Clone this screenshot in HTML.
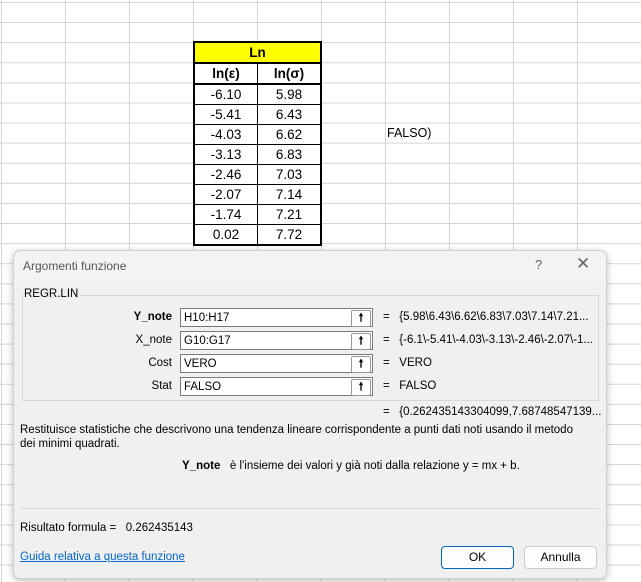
<!DOCTYPE html>
<html><head><style>
body{margin:0;width:641px;height:582px;overflow:hidden;position:relative;background:#fff;font-family:"Liberation Sans",sans-serif;}
.grid{position:absolute;left:0;top:0;width:641px;height:582px;
background-image:linear-gradient(to right,#d4d4d4 1px,transparent 1px),linear-gradient(to bottom,#d4d4d4 1px,transparent 1px);
background-size:64px 20.1px;background-position:1px 2px;}
table.t{position:absolute;left:193px;top:41px;border-collapse:collapse;font-size:13.5px;border:2px solid #000}
table.t td{border:1px solid #000;width:62px;height:19px;text-align:center;padding:0;background:#fff}
table.t tr.h td{font-weight:bold;border-bottom:2px solid #000}
.abs{position:absolute;white-space:nowrap}
.dlg{position:absolute;left:13px;top:250px;width:592px;height:327px;background:#f0f0f0;border:1px solid #cfcfcf;border-radius:7px;box-shadow:0 2px 8px rgba(0,0,0,.25);font-size:11.5px;color:#000}
.inp{position:absolute;left:166px;width:193px;height:19px;background:#fff;border:1px solid #7a7a7a;box-sizing:border-box;font-size:11.5px;line-height:19px;padding-left:3px}
.inp span{position:absolute;right:1px;top:1px;width:18px;height:15px;border:1px solid #999;border-radius:2px;font-size:11px;line-height:14px;text-align:center;font-weight:bold;background:#fff}
.lbl{position:absolute;right:434px;text-align:right}
.btn{position:absolute;top:295px;height:21px;width:71px;border:1px solid #ccc;border-radius:4px;background:#fdfdfd;text-align:center;line-height:21px;font-size:12px}
</style></head><body>
<div class="grid"></div>
<table class="t">
<tr><td colspan="2" style="background:#ffff00;font-weight:bold;border-bottom:2px solid #000">Ln</td></tr>
<tr class="h"><td>ln(ε)</td><td>ln(σ)</td></tr>
<tr><td>-6.10</td><td>5.98</td></tr>
<tr><td>-5.41</td><td>6.43</td></tr>
<tr><td>-4.03</td><td>6.62</td></tr>
<tr><td>-3.13</td><td>6.83</td></tr>
<tr><td>-2.46</td><td>7.03</td></tr>
<tr><td>-2.07</td><td>7.14</td></tr>
<tr><td>-1.74</td><td>7.21</td></tr>
<tr><td>0.02</td><td>7.72</td></tr>
</table>
<div class="abs" style="left:387px;top:126px;font-size:12.5px">FALSO)</div>
<div class="dlg">
<div style="position:absolute;left:0;top:0;right:0;height:35px;background:#f3f3f3;border-radius:7px 7px 0 0"></div>
<div class="abs" style="left:9px;top:8px;font-size:12px;color:#555">Argomenti funzione</div>
<div class="abs" style="left:521px;top:6px;font-size:13px;color:#666">?</div>
<div class="abs" style="left:562px;top:3px;font-size:17px;color:#666">✕</div>
<div style="position:absolute;left:8px;top:44px;width:575px;height:104px;border:1px solid #d8d8d8"></div>
<div class="abs" style="left:10px;top:37px;background:#f0f0f0;padding-right:2px">REGR.LIN</div>
<div class="lbl" style="top:60px;font-weight:bold">Y_note</div>
<div class="inp" style="top:57px">H10:H17<span>🠕</span></div>
<div class="abs" style="left:369px;top:60px">=&nbsp;&nbsp; {5.98\6.43\6.62\6.83\7.03\7.14\7.21...</div>
<div class="lbl" style="top:83px">X_note</div>
<div class="inp" style="top:80px">G10:G17<span>🠕</span></div>
<div class="abs" style="left:369px;top:83px">=&nbsp;&nbsp; {-6.1\-5.41\-4.03\-3.13\-2.46\-2.07\-1...</div>
<div class="lbl" style="top:106px">Cost</div>
<div class="inp" style="top:103px">VERO<span>🠕</span></div>
<div class="abs" style="left:369px;top:106px">=&nbsp;&nbsp; VERO</div>
<div class="lbl" style="top:129px">Stat</div>
<div class="inp" style="top:126px">FALSO<span>🠕</span></div>
<div class="abs" style="left:369px;top:129px">=&nbsp;&nbsp; FALSO</div>
<div class="abs" style="left:369px;top:155px">=&nbsp;&nbsp; {0.262435143304099,7.68748547139...</div>
<div class="abs" style="left:6px;top:172px;line-height:14px">Restituisce statistiche che descrivono una tendenza lineare corrispondente a punti dati noti usando il metodo<br>dei minimi quadrati.</div>
<div class="abs" style="left:168px;top:209px"><b>Y_note</b>&nbsp;&nbsp; è l'insieme dei valori y già noti dalla relazione y = mx + b.</div>
<div style="position:absolute;left:6px;right:8px;top:257px;border-top:1px solid #d8d8d8"></div>
<div class="abs" style="left:6px;top:271px">Risultato formula =&nbsp;&nbsp; 0.262435143</div>
<div class="abs" style="left:6px;top:300px;color:#0066cc;text-decoration:underline">Guida relativa a questa funzione</div>
<div class="btn" style="left:427px;border:1px solid #0067c0">OK</div>
<div class="btn" style="left:510px">Annulla</div>
</div>
</body></html>
